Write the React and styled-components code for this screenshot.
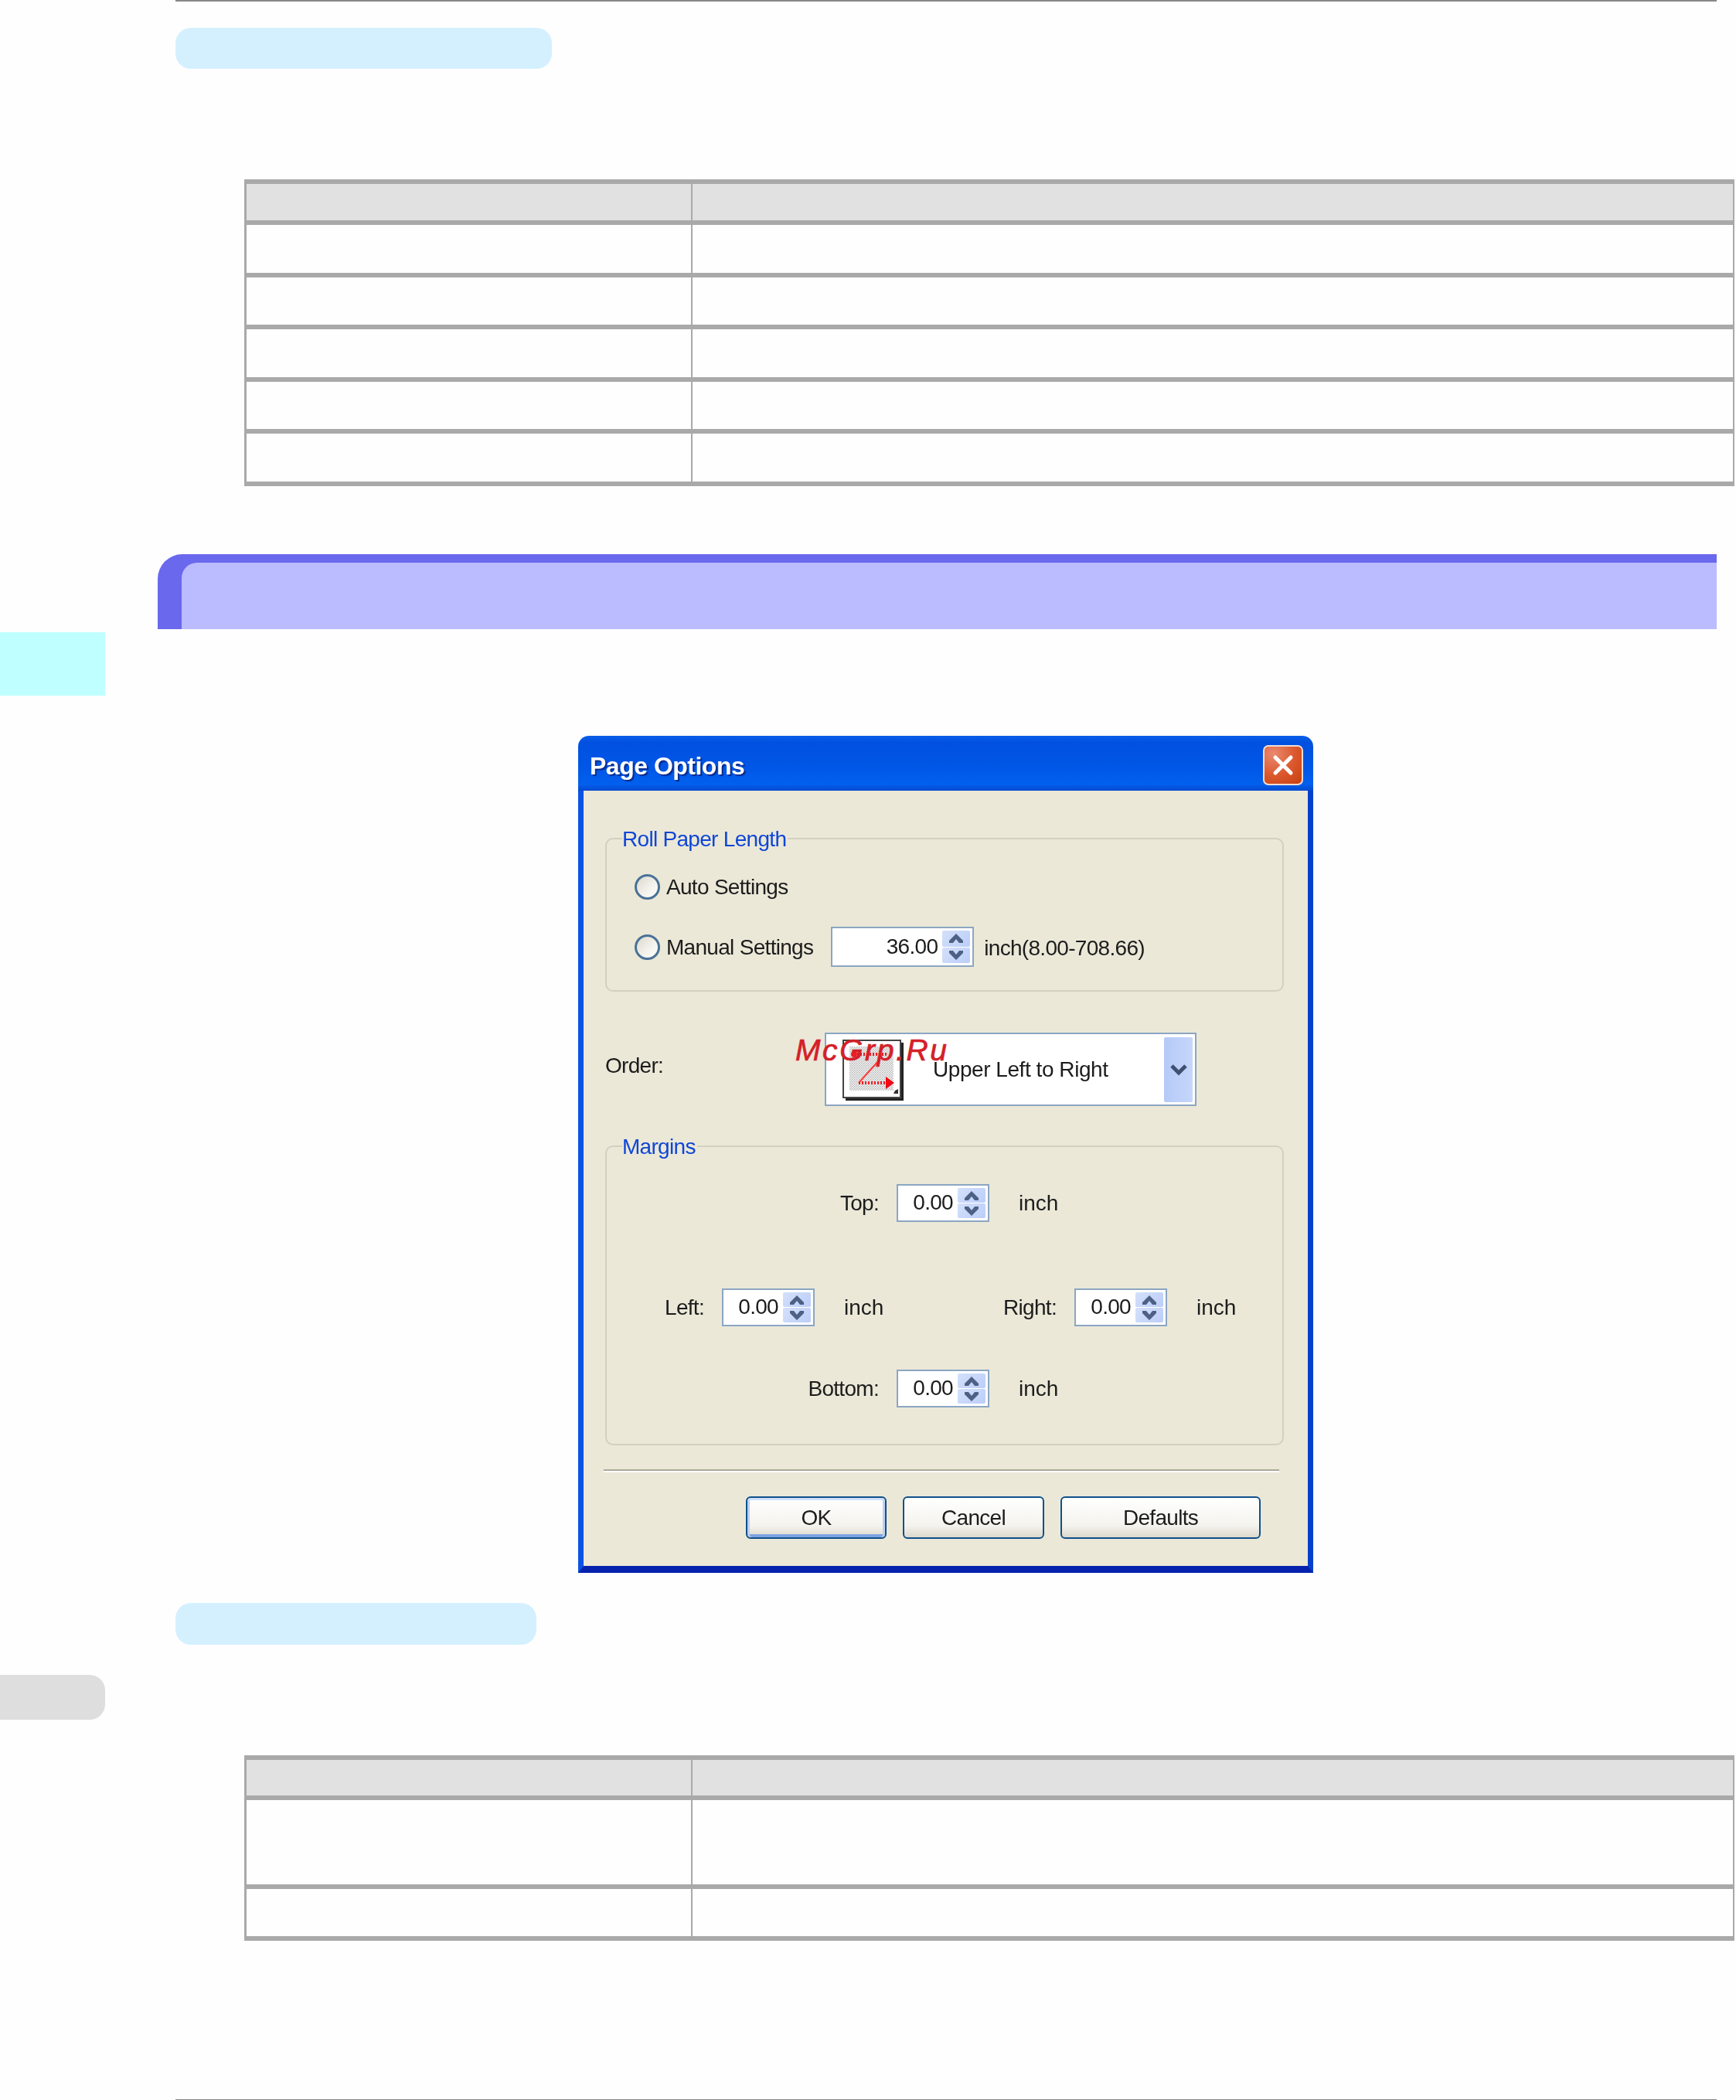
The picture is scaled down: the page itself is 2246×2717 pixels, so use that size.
import React from 'react';
import styled, { createGlobalStyle, css } from 'styled-components';

const GlobalStyle = createGlobalStyle`
  html, body {
    margin: 0;
    padding: 0;
    background: #fefefe;
  }
`;

// the dialog in the picture is an upscaled bitmap, so its parts are a little soft
const soft = css`
  filter: blur(0.6px);
`;

const Page = styled.div`
  display: flex;
  width: 2246px;
  height: 2717px;
  overflow: hidden;
  background: #fefefe;
  font-family: "Liberation Sans", Arial, sans-serif;
`;

const Rail = styled.div`
  flex: 0 0 136px;
  display: flex;
  flex-direction: column;
  padding-top: 818px;
`;

const CyanTab = styled.div`
  height: 82px;
  background: #bfffff;
`;

const GrayTab = styled.div`
  height: 58px;
  margin-top: 1267px;
  background: #dedede;
  border-radius: 0 20px 20px 0;
`;

const Main = styled.div`
  flex: 0 0 1994px;
  min-width: 0;
  margin-left: 91px;
  display: flex;
  flex-direction: column;
  align-items: flex-start;
`;

const Rule = styled.div`
  flex: none;
  width: 100%;
  height: 2px;
  margin-top: ${p => p.$top || 0}px;
  background: #888888;
`;

const Pill = styled.div`
  flex: none;
  width: ${p => p.$w}px;
  height: ${p => p.$h}px;
  margin-top: ${p => p.$top}px;
  background: #d4f0ff;
  border-radius: 20px;
`;

const Table = styled.div`
  flex: none;
  box-sizing: border-box;
  width: 1928px;
  margin-top: 143px;
  margin-left: 89px;
  border-top: 6px solid #a9a9a9;
  border-left: 3px solid #a9a9a9;
  border-right: 2px solid #a9a9a9;
`;

const Row = styled.div`
  display: grid;
  grid-template-columns: 577px 1fr;
  height: ${p => p.$h}px;
  box-sizing: content-box;
  border-bottom: 6px solid #a9a9a9;
  background: ${p => (p.$head ? '#e1e1e1' : '#fefefe')};
`;

const NameCell = styled.div`
  border-right: 2px solid #a9a9a9;
`;

const ValueCell = styled.div``;

const Band = styled.div`
  flex: none;
  width: 2017px;
  height: 97px;
  box-sizing: border-box;
  margin-top: 88px;
  margin-left: -23px;
  padding: 11px 0 0 31px;
  background: #6a68ec;
  border-top-left-radius: 32px;
`;

const BandInner = styled.div`
  height: 100%;
  background: #bbbbff;
  border-top-left-radius: 20px;
`;

const Dialog = styled.div`
  flex: none;
  width: 951px;
  margin-top: 138px;
  margin-left: 521px;
  font-size: 28px;
  letter-spacing: -0.7px;
  line-height: 30px;
  color: #1c1c1c;
`;

const TitleBar = styled.div`
  ${soft}
  display: flex;
  justify-content: space-between;
  align-items: flex-start;
  height: 71px;
  box-sizing: border-box;
  padding: 12px 13px 0 15px;
  border-radius: 14px 14px 0 0;
  background: linear-gradient(180deg, #0a5fe8 0%, #0250e0 12%, #0056e6 55%, #0260ee 88%, #0349cf 100%);
`;

const Title = styled.div`
  margin-top: 9px;
  font-size: 32px;
  font-weight: 700;
  letter-spacing: -0.5px;
  line-height: 36px;
  color: #ffffff;
  text-shadow: 2px 2px 1px #0a2a8c;
`;

const CloseButton = styled.div`
  display: flex;
  align-items: center;
  justify-content: center;
  width: 52px;
  height: 52px;
  box-sizing: border-box;
  border: 2px solid #f2ddd2;
  border-radius: 7px;
  background: radial-gradient(circle at 25% 20%, #ea8a70 0%, #dc5a30 50%, #c93f0c 100%);
`;

const Client = styled.div`
  padding: 61px 31px 35px 28px;
  border-left: 7px solid #0a52e6;
  border-right: 7px solid #0540cc;
  border-bottom: 9px solid #0422ad;
  background: #ebe8d8;
`;

const Group = styled.div`
  ${soft}
  position: relative;
  box-sizing: border-box;
  height: ${p => p.$h}px;
  border: 2px solid #d2d0bf;
  border-radius: 10px;
`;

const Legend = styled.div`
  position: absolute;
  top: -15px;
  left: 20px;
  padding-right: 2px;
  background: #ebe8d8;
  color: #0f46d6;
`;

const Settings = styled.div`
  display: flex;
  flex-direction: column;
  gap: 26px;
  padding: 35px 0 0 36px;
`;

const SettingRow = styled.div`
  display: flex;
  align-items: center;
  height: 52px;
`;

const Radio = styled.div`
  flex: none;
  width: 33px;
  height: 33px;
  box-sizing: border-box;
  margin-right: 8px;
  border: 3px solid #4a7297;
  border-radius: 50%;
  background: linear-gradient(135deg, #dcd9cd 0%, #f4f3ee 60%, #ffffff 100%);
`;

const SettingText = styled.div`
  margin-top: 2px;
  margin-right: ${p => p.$gap || 0}px;
  white-space: nowrap;
`;

const Spin = styled.div`
  flex: none;
  display: flex;
  justify-content: flex-end;
  align-items: stretch;
  gap: 6px;
  width: ${p => p.$w}px;
  height: ${p => p.$h}px;
  box-sizing: border-box;
  padding: 3px;
  border: 2px solid #8ca6c2;
  background: #ffffff;
`;

const SpinValue = styled.div`
  align-self: center;
  margin-top: -1px;
`;

const SpinButtons = styled.div`
  flex: none;
  display: flex;
  flex-direction: column;
  gap: 1px;
  width: 36px;
`;

const SpinButton = styled.div`
  flex: 1;
  display: flex;
  align-items: center;
  justify-content: center;
  border-radius: 2px;
  background: linear-gradient(135deg, #d4e0fb 0%, #bccdf8 100%);
`;

const Inch = styled.div`
  margin: 4px 0 0 13px;
  white-space: nowrap;
`;

const OrderRow = styled.div`
  position: relative;
  display: flex;
  align-items: center;
  height: 95px;
  margin: 53px 0 51px;
`;

const OrderLabel = styled.div`
  ${soft}
  flex: 0 0 284px;
  margin-top: -10px;
`;

const Combo = styled.div`
  ${soft}
  display: flex;
  align-items: center;
  width: 481px;
  height: 95px;
  box-sizing: border-box;
  padding: 4px 3px 3px 21px;
  border: 2px solid #8ca6c2;
  background: #ffffff;
`;

const ComboText = styled.div`
  flex: 1;
  margin-left: 38px;
  letter-spacing: -0.45px;
  white-space: nowrap;
`;

const ComboButton = styled.div`
  flex: none;
  display: flex;
  align-items: center;
  justify-content: center;
  align-self: stretch;
  width: 37px;
  border-radius: 2px;
  background: linear-gradient(90deg, #b6caf8 0%, #c6d6fb 100%);
`;

const Watermark = styled.div`
  position: absolute;
  left: 246px;
  top: 1px;
  font-size: 39px;
  font-style: italic;
  letter-spacing: 2.6px;
  line-height: 44px;
  color: #d42027;
  -webkit-text-stroke: 0.7px #d42027;
  white-space: nowrap;
`;

const MarginRow = styled.div`
  display: flex;
  gap: 124px;
  margin-top: ${p => p.$top}px;
  padding-left: ${p => p.$pad}px;
`;

const Field = styled.div`
  display: flex;
  align-items: center;
  width: 332px;
`;

const FieldLabel = styled.div`
  flex: 0 0 100px;
  margin-right: 23px;
  text-align: right;
`;

const FieldUnit = styled.div`
  margin-left: 38px;
  letter-spacing: 0;
`;

const Separator = styled.div`
  ${soft}
  width: 874px;
  height: 2px;
  margin: 31px 0 33px -2px;
  background: #aca899;
  box-shadow: 0 2px 0 #ffffff;
`;

const Buttons = styled.div`
  ${soft}
  display: flex;
  gap: 21px;
  padding-left: 182px;
`;

const Button = styled.div`
  display: flex;
  align-items: center;
  justify-content: center;
  width: ${p => p.$w}px;
  height: 55px;
  box-sizing: border-box;
  border: 2px solid #10508c;
  border-radius: 6px;
  background: linear-gradient(180deg, #ffffff 0%, #f4f3ee 70%, #dcd8cc 100%);
  box-shadow: ${p => (p.$primary ? 'inset 0 3px 0 #cfe0fb, inset 3px 0 0 #bdd0f4, inset -3px 0 0 #bdd0f4, inset 0 -4px 0 #7da2e2' : 'none')};
`;

const Up = () => (
  <svg width="22" height="14" viewBox="0 0 22 14">
    <polygon points="11,1 20,10 20,13 15,13 11,8 7,13 2,13 2,10" fill="#4d6185" />
  </svg>
);

const Down = () => (
  <svg width="22" height="14" viewBox="0 0 22 14">
    <polygon points="11,13 20,4 20,1 15,1 11,6 7,1 2,1 2,4" fill="#4d6185" />
  </svg>
);

const SpinBox = ({ value, big }) => (
  <Spin $w={big ? 185 : 120} $h={big ? 52 : 49}>
    <SpinValue>{value}</SpinValue>
    <SpinButtons>
      <SpinButton><Up /></SpinButton>
      <SpinButton><Down /></SpinButton>
    </SpinButtons>
  </Spin>
);

const MarginField = ({ label }) => (
  <Field>
    <FieldLabel>{label}</FieldLabel>
    <SpinBox value="0.00" />
    <FieldUnit>inch</FieldUnit>
  </Field>
);

const OrderIcon = () => (
  <svg width="79" height="79" viewBox="0 0 79 79">
    <defs>
      <pattern id="dither" width="3" height="3" patternUnits="userSpaceOnUse">
        <rect width="3" height="3" fill="#f8f8f8" />
        <rect width="1.5" height="1.5" fill="#b4b4b4" />
        <rect x="1.5" y="1.5" width="1.5" height="1.5" fill="#c4c4c4" />
      </pattern>
    </defs>
    <rect x="4" y="4" width="75" height="75" fill="#222222" />
    <rect x="1" y="1" width="74" height="74" fill="#ffffff" stroke="#444444" strokeWidth="2" />
    <rect x="9" y="9" width="57" height="57" fill="url(#dither)" />
    <path d="M66 70 l6 0 l0 -6 l-4 2 z" fill="#333333" />
    <circle cx="15" cy="19" r="4" fill="#ee1c25" />
    <line x1="15" y1="19" x2="59" y2="19" stroke="#ee1c25" strokeWidth="4" strokeDasharray="2 2" />
    <line x1="48" y1="26" x2="21" y2="56" stroke="#ff3a3a" strokeWidth="2" />
    <line x1="21" y1="56" x2="57" y2="56" stroke="#ee1c25" strokeWidth="4" strokeDasharray="2 2" />
    <polygon points="56,48 67,56 56,64" fill="#ee0a14" />
  </svg>
);

const firstRows = [62, 61, 62, 61, 62];
const secondRows = [109, 61];

const DataTable = ({ head, rows }) => (
  <Table>
    <Row $h={head} $head>
      <NameCell />
      <ValueCell />
    </Row>
    {rows.map((h, i) => (
      <Row key={i} $h={h}>
        <NameCell />
        <ValueCell />
      </Row>
    ))}
  </Table>
);

export default function App() {
  return (
    <Page>
      <GlobalStyle />
      <Rail>
        <CyanTab />
        <GrayTab />
      </Rail>
      <Main>
        <Rule />
        <Pill $w={487} $h={53} $top={34} />
        <DataTable head={47} rows={firstRows} />
        <Band>
          <BandInner />
        </Band>
        <Dialog>
          <TitleBar>
            <Title>Page Options</Title>
            <CloseButton>
              <svg width="30" height="30" viewBox="0 0 30 30">
                <path d="M5 5 L25 25 M25 5 L5 25" stroke="#ffffff" strokeWidth="5" strokeLinecap="round" />
              </svg>
            </CloseButton>
          </TitleBar>
          <Client>
            <Group $h={199}>
              <Legend>Roll Paper Length</Legend>
              <Settings>
                <SettingRow>
                  <Radio />
                  <SettingText>Auto Settings</SettingText>
                </SettingRow>
                <SettingRow>
                  <Radio />
                  <SettingText $gap={23}>Manual Settings</SettingText>
                  <SpinBox value="36.00" big />
                  <Inch>inch(8.00-708.66)</Inch>
                </SettingRow>
              </Settings>
            </Group>
            <OrderRow>
              <OrderLabel>Order:</OrderLabel>
              <Combo>
                <OrderIcon />
                <ComboText>Upper Left to Right</ComboText>
                <ComboButton>
                  <svg width="26" height="18" viewBox="0 0 26 18">
                    <polyline points="4,4 13,13 22,4" fill="none" stroke="#3f5070" strokeWidth="5" />
                  </svg>
                </ComboButton>
              </Combo>
              <Watermark>McGrp.Ru</Watermark>
            </OrderRow>
            <Group $h={388}>
              <Legend>Margins</Legend>
              <MarginRow $top={48} $pad={252}>
                <MarginField label="Top:" />
              </MarginRow>
              <MarginRow $top={86} $pad={26}>
                <MarginField label="Left:" />
                <MarginField label="Right:" />
              </MarginRow>
              <MarginRow $top={56} $pad={252}>
                <MarginField label="Bottom:" />
              </MarginRow>
            </Group>
            <Separator />
            <Buttons>
              <Button $w={182} $primary>OK</Button>
              <Button $w={183}>Cancel</Button>
              <Button $w={259}>Defaults</Button>
            </Buttons>
          </Client>
        </Dialog>
        <Pill $w={467} $h={54} $top={39} />
        <DataTable head={46} rows={secondRows} />
        <Rule $top={205} />
      </Main>
    </Page>
  );
}
